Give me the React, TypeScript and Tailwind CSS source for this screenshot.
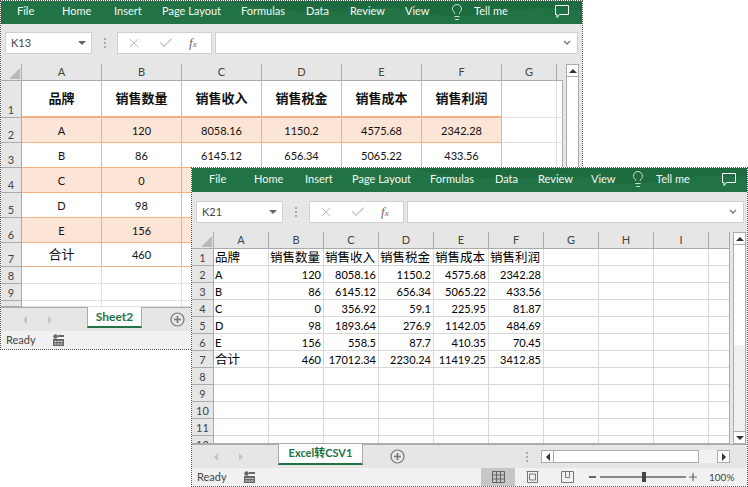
import type { ReactNode } from "react";
import { Check, Lightbulb, X } from "lucide-react";

const UI_FONT = "font-['Lato','Noto_Sans_CJK_SC',sans-serif]";

const columnsBack = ["A", "B", "C", "D", "E", "F"];
const columnsFront = ["A", "B", "C", "D", "E", "F", "G", "H", "I"];

const sheetRows = [
  ["品牌", "销售数量", "销售收入", "销售税金", "销售成本", "销售利润"],
  ["A", "120", "8058.16", "1150.2", "4575.68", "2342.28"],
  ["B", "86", "6145.12", "656.34", "5065.22", "433.56"],
  ["C", "0", "356.92", "59.1", "225.95", "81.87"],
  ["D", "98", "1893.64", "276.9", "1142.05", "484.69"],
  ["E", "156", "558.5", "87.7", "410.35", "70.45"],
  ["合计", "460", "17012.34", "2230.24", "11419.25", "3412.85"],
];

const backHeights = [37, 25, 25, 25, 25, 25, 24, 17, 17, 6];

function Ribbon({ tabs, h, bulbX, tellX, commentX }: { tabs: [string, number][]; h: number; bulbX: number; tellX: number; commentX: number }) {
  return (
    <div className="relative flex shrink-0 items-center overflow-hidden bg-[#217346] pb-[2px] text-[11px] text-[#f2f7f4]" style={{ height: h }}>
      <svg className="absolute inset-0 h-full w-full" viewBox="0 0 556 23" preserveAspectRatio="none">
        <path d="M220 0c40 10 90 14 130 8s50 8 90 7 60-12 116-6V0z" fill="#1e6b40" />
      </svg>
      {tabs.map(([name, x]) => (
        <span key={name} className="absolute whitespace-nowrap" style={{ left: x }}>
          {name}
        </span>
      ))}
      <Lightbulb className="absolute h-[18px] w-[18px]" strokeWidth={1.1} style={{ left: bulbX }} />
      <span className="absolute whitespace-nowrap" style={{ left: tellX }}>Tell me</span>
      <svg className="absolute h-[15px] w-[16px]" viewBox="0 0 16 15" fill="none" stroke="#fff" style={{ left: commentX }}>
        <path d="M1.5 1.5h13v9h-9l-2.5 3v-3H1.5z" />
      </svg>
    </div>
  );
}

function GripDots() {
  return (
    <div className="flex flex-col items-center gap-[2px]">
      <span className="h-[2px] w-[2px] bg-[#aaa]" />
      <span className="h-[2px] w-[2px] bg-[#aaa]" />
      <span className="h-[2px] w-[2px] bg-[#aaa]" />
    </div>
  );
}

function FormulaBar({ name, top, gap, rightPad }: { name: string; top: number; gap: number; rightPad: number }) {
  return (
    <div className="flex h-[40px] shrink-0 items-start bg-[#e6e6e6] pl-[4px]" style={{ paddingTop: top, paddingRight: rightPad }}>
      <div className="flex h-[22px] w-[87px] items-center justify-between border border-[#d0d0d0] bg-white pl-[5px] pr-[5px] text-[11px] text-[#444]">
        <span>{name}</span>
        <span className="h-0 w-0 border-x-[4px] border-t-[4px] border-x-transparent border-t-[#666]" />
      </div>
      <div className="flex h-[22px] items-center justify-center" style={{ width: gap }}>
        <GripDots />
      </div>
      <div className="flex h-[22px] w-[95px] items-center border border-[#d0d0d0] bg-white text-[#c0c0c0]">
        <X className="ml-[8px] h-[16px] w-[16px]" strokeWidth={1.5} />
        <Check className="ml-[16px] h-[16px] w-[16px]" strokeWidth={1.8} />
        <span className="ml-[15px] font-['Liberation_Serif',serif] text-[13px] italic text-[#666]">
          f<span className="text-[9px]">x</span>
        </span>
      </div>
      <div className="ml-[3px] flex h-[22px] flex-1 items-center justify-end border border-[#d0d0d0] bg-white pr-[6px]">
        <svg width="8" height="6" viewBox="0 0 8 6" fill="none" stroke="#777" strokeWidth="1.4">
          <path d="M1 1l3 3 3-3" />
        </svg>
      </div>
    </div>
  );
}

function HeaderRow({ labels, headW, widths }: { labels: string[]; headW: number; widths: number[] }) {
  return (
    <div className="flex h-[17px] shrink-0 border-b border-[#ababab] bg-[#e6e6e6] text-[11px] text-[#444]">
      <div className="flex shrink-0 items-end justify-end border-r border-[#ababab] pb-[1px] pr-[1px]" style={{ width: headW }}>
        <span className="h-0 w-0 border-b-[11px] border-l-[11px] border-b-[#b9b9b9] border-l-transparent" />
      </div>
      {widths.map((w, i) => (
        <div key={i} className="flex shrink-0 items-center justify-center border-r border-[#ababab]" style={{ width: w }}>
          {labels[i]}
        </div>
      ))}
    </div>
  );
}

function TabStrip({ tab, tabW, tabSize, plusGap, children }: { tab: string; tabW: number; tabSize: string; plusGap: number; children?: ReactNode }) {
  return (
    <div className="flex h-[24px] shrink-0 bg-[#e6e6e6]">
      <div className="flex w-[86px] shrink-0 items-center border-t border-[#ababab]">
        <span className="ml-[22px] h-0 w-0 border-y-[4px] border-r-[4px] border-y-transparent border-r-[#c4c4c4]" />
        <span className="ml-[21px] h-0 w-0 border-y-[4px] border-l-[4px] border-y-transparent border-l-[#c4c4c4]" />
      </div>
      <div className={`flex h-[21px] shrink-0 items-center justify-center border-x border-b-2 border-x-[#ababab] border-b-[#217346] bg-white font-bold text-[#217346] ${tabSize}`} style={{ width: tabW }}>
        {tab}
      </div>
      <div className="flex flex-1 items-center border-t border-[#ababab]">
        <svg style={{ marginLeft: plusGap }} width="15" height="15" viewBox="0 0 15 15" fill="none" stroke="#777" strokeWidth="1.2">
          <circle cx="7.5" cy="7.5" r="6.5" />
          <path d="M7.5 4v7M4 7.5h7" strokeWidth="1.6" />
        </svg>
        {children}
      </div>
    </div>
  );
}

function MacroIcon() {
  return (
    <svg width="11" height="12" viewBox="0 0 11 12" fill="#666">
      <circle cx="2.5" cy="2.5" r="2.2" />
      <path d="M5 1h6v2H5zM0 5h11v7H0z" />
      <path d="M1.5 7h2v1h-2zM4.5 7h2v1h-2zM7.5 7h2v1h-2zM1.5 9.5h2v1h-2zM4.5 9.5h2v1h-2zM7.5 9.5h2v1h-2z" fill="#f1f1f1" />
    </svg>
  );
}

function ScrollButton({ dir }: { dir: "up" | "down" }) {
  return (
    <div className="flex h-[13px] w-[13px] shrink-0 items-center justify-center border border-[#ababab] bg-white">
      <span className={dir === "up" ? "h-0 w-0 border-x-[4px] border-b-[4px] border-x-transparent border-b-[#333]" : "h-0 w-0 border-x-[4px] border-t-[4px] border-x-transparent border-t-[#333]"} />
    </div>
  );
}

function BackWindow() {
  return (
    <div className={`absolute left-0 top-0 flex h-[350px] w-[583px] flex-col border border-dotted border-[#555] bg-white ${UI_FONT}`}>
      <Ribbon
        h={23}
        tabs={[["File", 16], ["Home", 61], ["Insert", 113], ["Page Layout", 161], ["Formulas", 240], ["Data", 305], ["Review", 349], ["View", 404]]}
        bulbX={447}
        tellX={473}
        commentX={553}
      />
      <FormulaBar name="K13" top={8} gap={25} rightPad={4} />
      <div className="flex min-h-0 flex-1 bg-[#e6e6e6]">
        <div className="flex w-[562px] shrink-0 flex-col overflow-hidden">
          <HeaderRow labels={[...columnsBack, "G"]} headW={21} widths={[80, 80, 80, 80, 80, 80, 55]} />
          <div className="flex-1 overflow-hidden bg-white">
            {backHeights.map((h, i) => {
              const row = sheetRows[i];
              const styled = i < 7;
              return (
                <div key={i} className="flex" style={{ height: h }}>
                  <div className="flex w-[21px] shrink-0 items-end justify-center border-r border-b border-[#ababab] bg-[#e6e6e6] text-[11px] leading-[15px] text-[#444]">
                    {i < 9 ? i + 1 : ""}
                  </div>
                  {columnsBack.map((c, j) => (
                    <div
                      key={c}
                      className={`flex w-[80px] shrink-0 items-center justify-center text-[11px] leading-none text-[#111] ${
                        styled ? "border-r border-b border-[#f4b183]" : "border-r border-b border-[#e0e0e0]"
                      } ${i === 0 ? "border-b-2 text-[13px] font-bold" : ""} ${i % 2 === 1 && i < 6 ? "bg-[#fce4d6]" : ""} ${i === 6 && j === 0 ? "text-[13px]" : ""}`}
                    >
                      {row && (i < 3 || j < 2) ? row[j] : ""}
                    </div>
                  ))}
                  <div className="w-[55px] shrink-0 border-r border-b border-[#e0e0e0]" />
                  <div className="flex-1 border-r border-b border-r-[#ababab] border-b-[#e0e0e0]" />
                </div>
              );
            })}
          </div>
        </div>
        <div className="ml-[3px] flex w-[14px] flex-col">
          <ScrollButton dir="up" />
          <div className="w-[13px] flex-1 border-x border-[#ababab] bg-white" />
        </div>
      </div>
      <TabStrip tab="Sheet2" tabW={55} tabSize="text-[12px]" plusGap={28} />
      <div className="flex h-[18px] shrink-0 items-center gap-[17px] bg-[#f1f1f1] pl-[5px] text-[11px] text-[#444]">
        <span>Ready</span>
        <MacroIcon />
      </div>
    </div>
  );
}

function FrontWindow() {
  return (
    <div className={`absolute left-[191px] top-[167px] flex h-[320px] w-[557px] flex-col border border-dotted border-[#555] bg-white ${UI_FONT}`}>
      <Ribbon
        h={24}
        tabs={[["File", 17], ["Home", 62], ["Insert", 113], ["Page Layout", 160], ["Formulas", 238], ["Data", 303], ["Review", 346], ["View", 399]]}
        bulbX={437}
        tellX={464}
        commentX={529}
      />
      <FormulaBar name="K21" top={9} gap={26} rightPad={3} />
      <div className="flex min-h-0 flex-1 bg-[#e6e6e6]">
        <div className="flex w-[538px] shrink-0 flex-col overflow-hidden">
          <HeaderRow labels={columnsFront} headW={22} widths={[55, 55, 55, 55, 55, 55, 55, 55, 55, 21]} />
          <div className="flex-1 overflow-hidden border-r border-b border-[#ababab] bg-white">
            {Array.from({ length: 12 }, (_, i) => (
              <div key={i} className="flex h-[17px]">
                <div className="flex w-[22px] shrink-0 items-center justify-center border-r border-b border-[#ababab] bg-[#e6e6e6] pt-[1px] text-[11px] leading-none text-[#444]">
                  {i + 1}
                </div>
                {columnsFront.map((c, j) => {
                  const value = sheetRows[i]?.[j] ?? "";
                  const isCjk = i === 0 || value === "合计";
                  return (
                    <div
                      key={c}
                      className={`flex w-[55px] shrink-0 items-center whitespace-nowrap border-r border-b border-[#d8d8d8] pl-[1px] pr-[2px] leading-none text-black ${
                        i === 0 || j === 0 ? "justify-start" : "justify-end"
                      } ${isCjk ? "pt-[2px] text-[12.5px]" : "pt-[1px] text-[11px]"}`}
                    >
                      {value}
                    </div>
                  );
                })}
                <div className="w-[21px] shrink-0 border-b border-[#d8d8d8]" />
              </div>
            ))}
          </div>
        </div>
        <div className="ml-[3px] flex w-[13px] flex-col">
          <ScrollButton dir="up" />
          <div className="w-[13px] flex-1 border-x border-[#ababab] bg-[#f1f1f1]">
            <div className="h-[100px] bg-white" />
          </div>
          <ScrollButton dir="down" />
        </div>
      </div>
      <TabStrip tab="Excel转CSV1" tabW={85} tabSize="text-[11px]" plusGap={27}>
        <div className="ml-auto mr-[17px] flex items-center">
          <div className="mr-[13px]">
            <GripDots />
          </div>
          <div className="flex h-[13px] w-[189px] items-center bg-[#f1f1f1]">
            <div className="flex h-[13px] w-[13px] items-center justify-center border border-[#ababab] bg-white">
              <span className="h-0 w-0 border-y-[4px] border-r-[4px] border-y-transparent border-r-[#333]" />
            </div>
            <div className="h-[13px] w-[145px] border-y border-r border-[#ababab] bg-white" />
            <div className="ml-auto flex h-[13px] w-[13px] items-center justify-center border border-[#ababab] bg-white">
              <span className="h-0 w-0 border-y-[4px] border-l-[4px] border-y-transparent border-l-[#333]" />
            </div>
          </div>
        </div>
      </TabStrip>
      <div className="flex h-[18px] shrink-0 items-center bg-[#f1f1f1] pl-[5px] text-[11px] text-[#444]">
        <span>Ready</span>
        <span className="ml-[17px]"><MacroIcon /></span>
        <div className="ml-auto flex h-full items-center pr-[15px]">
          <div className="flex h-full w-[34px] items-center justify-center bg-[#c6c6c6]">
            <svg width="13" height="12" viewBox="0 0 13 12" fill="none" stroke="#666">
              <path d="M.5.5h12v11H.5zM4.5.5v11M8.5.5v11M.5 4h12M.5 8h12" />
            </svg>
          </div>
          <svg className="ml-[11px]" width="13" height="12" viewBox="0 0 13 12" fill="none" stroke="#777">
            <path d="M1.5.5h10v11h-10zM3.5 3h6v6h-6zM.5.5h12" />
          </svg>
          <svg className="ml-[22px]" width="13" height="12" viewBox="0 0 13 12" fill="none" stroke="#777">
            <path d="M.5.5h12v11H.5zM4.5.5v6h4v-6" />
          </svg>
          <span className="ml-[15px] h-[1.5px] w-[7px] bg-[#666]" />
          <div className="relative ml-[4px] h-[1.5px] w-[86px] bg-[#888]">
            <span className="absolute left-[42px] top-[-4px] h-[10px] w-[4px] bg-[#444]" />
          </div>
          <svg className="ml-[3px]" width="8" height="8" viewBox="0 0 8 8" stroke="#666" strokeWidth="1.2">
            <path d="M0 4h8M4 0v8" />
          </svg>
          <span className="ml-[12px] w-[23px] whitespace-nowrap text-[10px]">100%</span>
        </div>
      </div>
    </div>
  );
}

export default function App() {
  return (
    <div className="relative h-[487px] w-[748px] overflow-hidden bg-white">
      <BackWindow />
      <FrontWindow />
    </div>
  );
}
